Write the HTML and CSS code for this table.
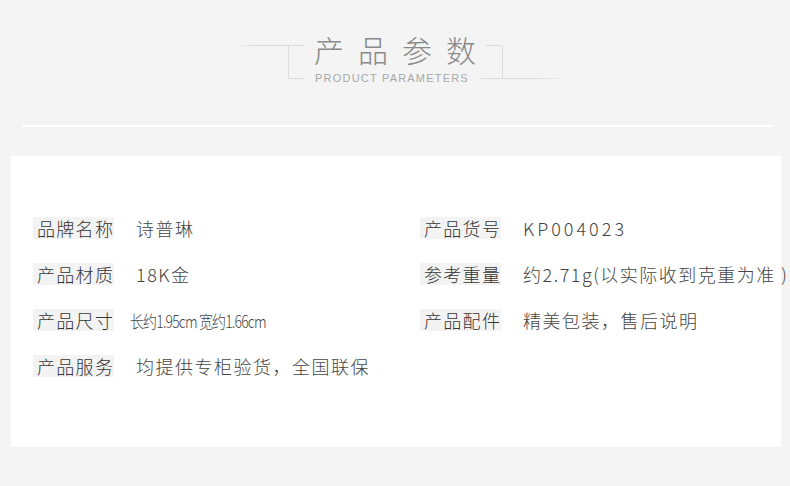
FILE: index.html
```html
<!DOCTYPE html>
<html lang="zh-CN">
<head>
    <meta charset="UTF-8">
    <meta name="viewport" content="width=device-width, initial-scale=1.0">
    <title>产品参数</title>
    <link rel="stylesheet" href="styles.css">
</head>
<body>
    <div class="head">
        <div class="deco-left">
            <span class="fade-line"></span>
            <span class="bracket"></span>
        </div>
        <div class="head-title">
            <h1>产品参数</h1>
            <p>PRODUCT PARAMETERS</p>
        </div>
        <div class="deco-right">
            <span class="bracket"></span>
            <span class="fade-line"></span>
        </div>
    </div>
    <div class="divider"></div>

    <div class="panel">
        <div class="params">
            <div class="row">
                <span class="label">品牌名称</span>
                <span class="value">诗普琳</span>
            </div>
            <div class="row">
                <span class="label">产品货号</span>
                <span class="value code">KP004023</span>
            </div>
            <div class="row">
                <span class="label">产品材质</span>
                <span class="value">18K金</span>
            </div>
            <div class="row">
                <span class="label">参考重量</span>
                <span class="value">约2.71g(以实际收到克重为准 )</span>
            </div>
            <div class="row">
                <span class="label">产品尺寸</span>
                <span class="value narrow">长约1.95cm 宽约1.66cm</span>
            </div>
            <div class="row">
                <span class="label">产品配件</span>
                <span class="value">精美包装，售后说明</span>
            </div>
            <div class="row">
                <span class="label">产品服务</span>
                <span class="value">均提供专柜验货，全国联保</span>
            </div>
        </div>
    </div>
</body>
</html>
```

FILE: styles.css
```css
:root {
    --bg-color: #f4f4f4;
    --line-color: #dcdcdc;
    --title-color: #8a8a8a;
    --sub-color: #a8a8a8;
    --font-color: #3a3a3a;
    --label-bg: #f3f3f3;
}

body {
    margin: 0;
    background-color: var(--bg-color);
    font-family: "Noto Sans CJK SC", "Noto Sans", sans-serif;
    color: var(--font-color);
}

/* header */
.head {
    display: flex;
    justify-content: center;
    height: 125px;
    padding-left: 13px;
}

.deco-left,
.deco-right {
    display: flex;
    margin-top: 45px;
    height: 34px;
}

.deco-left .fade-line {
    width: 55px;
    height: 1px;
    background: linear-gradient(to right, rgba(220, 220, 220, 0), var(--line-color) 40%);
}

.deco-left .bracket {
    width: 15px;
    border-top: 1px solid var(--line-color);
    border-left: 1px solid var(--line-color);
    border-bottom: 1px solid var(--line-color);
}

.deco-right .bracket {
    width: 22px;
    border-right: 1px solid var(--line-color);
    border-bottom: 1px solid var(--line-color);
    box-sizing: border-box;
    background: linear-gradient(to right, transparent 5px, var(--line-color) 5px) top / 100% 1px no-repeat;
}

.deco-right .fade-line {
    width: 68px;
    align-self: flex-end;
    height: 1px;
    background: linear-gradient(to right, var(--line-color) 50%, rgba(220, 220, 220, 0));
}

.head-title {
    width: 177px;
    text-align: center;
    white-space: nowrap;
}

.head-title h1 {
    margin: 29px -22px 0 -2px;
    font-size: 30px;
    line-height: 40px;
    font-weight: 300;
    letter-spacing: 14px;
    color: var(--title-color);
}

.head-title p {
    margin: 2px 0 0;
    font-family: "Liberation Sans", "Noto Sans", sans-serif;
    font-size: 11px;
    line-height: 14px;
    letter-spacing: 1.2px;
    color: var(--sub-color);
}

.divider {
    height: 2px;
    margin: 0 17px 0 22px;
    background-color: #fff;
}

/* parameter panel */
.panel {
    margin: 29px 9px 0 11px;
    height: 230px;
    padding: 61px 0 0 22px;
    background-color: #fff;
}

.params {
    display: grid;
    grid-template-columns: 387px 1fr;
    row-gap: 24px;
}

.row {
    display: flex;
    align-items: center;
    height: 22px;
    white-space: nowrap;
}

.label {
    display: inline-block;
    width: 81px;
    height: 22px;
    line-height: 22px;
    padding-left: 4px;
    box-sizing: border-box;
    background-color: var(--label-bg);
    font-size: 18px;
    font-weight: 300;
    letter-spacing: 1.3px;
    color: #333;
}

.value {
    margin-left: 22px;
    font-size: 18px;
    font-weight: 300;
    letter-spacing: 1.5px;
    color: #444;
}

.value.code {
    letter-spacing: 3px;
}

.value.narrow {
    margin-left: 16px;
    display: inline-block;
    font-size: 17px;
    letter-spacing: -1px;
    transform: scaleX(0.82);
    transform-origin: left center;
}
```
